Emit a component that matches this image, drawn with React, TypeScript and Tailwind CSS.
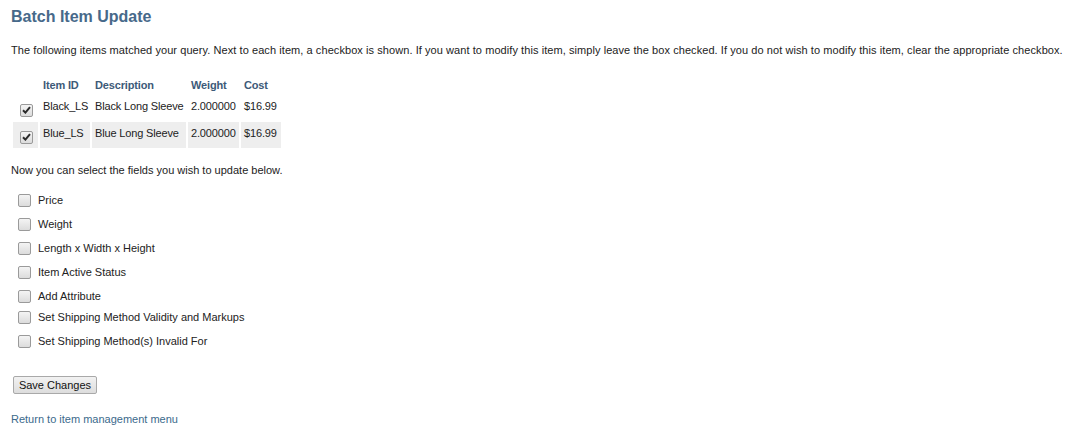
import React from "react";

function Box({ checked = false }: { checked?: boolean }) {
  return (
    <span className="inline-flex h-[13px] w-[13px] shrink-0 items-center justify-center rounded-[2px] border border-[#9a9a9a] bg-gradient-to-b from-[#f4f4f4] to-[#dcdcdc]">
      {checked && (
        <svg width="9" height="8" viewBox="0 0 9 8">
          <path d="M1 4.2 L3.4 6.6 L8 1.2" stroke="#2a2a2a" strokeWidth="2" fill="none" />
        </svg>
      )}
    </span>
  );
}

const rows = [
  { id: "Black_LS", desc: "Black Long Sleeve", weight: "2.000000", cost: "$16.99", bg: "bg-white" },
  { id: "Blue_LS", desc: "Blue Long Sleeve", weight: "2.000000", cost: "$16.99", bg: "bg-[#eeeeee]" },
];

const fields = [
  { label: "Price", h: "h-[24px]" },
  { label: "Weight", h: "h-[24px]" },
  { label: "Length x Width x Height", h: "h-[24px]" },
  { label: "Item Active Status", h: "h-[24px]" },
  { label: "Add Attribute", h: "h-[21px] pt-[3px]" },
  { label: "Set Shipping Method Validity and Markups", h: "h-[24px]" },
  { label: "Set Shipping Method(s) Invalid For", h: "h-[24px]" },
];

export default function App() {
  return (
    <div className="min-h-[440px] w-[1075px] bg-white px-[11px] pt-[7px] text-[11px] text-[#222] [font-family:Tahoma,'Liberation_Sans',Arial,sans-serif]">
      <h1 className="h-[20px] text-[16px] font-bold leading-[20px] text-[#47698a]">Batch Item Update</h1>
      <p className="mt-[16px] whitespace-nowrap leading-[14px] tracking-[0.07px]">
        The following items matched your query. Next to each item, a checkbox is shown. If you want to modify this item, simply leave the box checked. If you do not wish to modify this item, clear the appropriate checkbox.
      </p>
      <table className="mt-[18px] w-[272px] table-fixed border-separate border-spacing-x-[2px] border-spacing-y-[1px] tracking-[-0.15px]">
        <colgroup>
          <col className="w-[25px]" />
          <col className="w-[50px]" />
          <col className="w-[94px]" />
          <col className="w-[51px]" />
          <col className="w-[40px]" />
        </colgroup>
        <thead>
          <tr className="h-[18px] text-left font-bold text-[#3d5a78]">
            <th className="p-0"></th>
            <th className="whitespace-nowrap px-[3px] py-0 font-bold">Item ID</th>
            <th className="whitespace-nowrap px-[3px] py-0 font-bold">Description</th>
            <th className="whitespace-nowrap px-[3px] py-0 font-bold">Weight</th>
            <th className="whitespace-nowrap px-[3px] py-0 font-bold">Cost</th>
          </tr>
        </thead>
        <tbody>
          {rows.map((r) => (
            <tr key={r.id} className="h-[26px]">
              <td className={`${r.bg} p-0 pl-[7px] pt-[7px] align-top`}>
                <Box checked />
              </td>
              <td className={`${r.bg} whitespace-nowrap px-[3px] pt-[4px] align-top leading-[14px]`}>{r.id}</td>
              <td className={`${r.bg} whitespace-nowrap px-[3px] pt-[4px] align-top leading-[14px]`}>{r.desc}</td>
              <td className={`${r.bg} whitespace-nowrap px-[3px] pt-[4px] align-top leading-[14px]`}>{r.weight}</td>
              <td className={`${r.bg} whitespace-nowrap px-[3px] pt-[4px] align-top leading-[14px]`}>{r.cost}</td>
            </tr>
          ))}
        </tbody>
      </table>
      <p className="mt-[14px] leading-[14px]">Now you can select the fields you wish to update below.</p>
      <div className="mt-[11px] flex flex-col">
        {fields.map((f) => (
          <div key={f.label} className={`${f.h} flex items-center gap-[7px] pl-[7px]`}>
            <Box />
            <span className="leading-[14px]">{f.label}</span>
          </div>
        ))}
      </div>
      <div className="mt-[23px]">
        <button className="ml-[2px] h-[18px] w-[84px] rounded-[2px] border border-[#a9a9a9] bg-gradient-to-b from-[#f2f2f2] to-[#dddddd] text-[11px] leading-[14px] text-[#111]">
          Save Changes
        </button>
      </div>
      <div className="mt-[17px]">
        <a href="#" className="leading-[14px] text-[#3b6a8c]">Return to item management menu</a>
      </div>
    </div>
  );
}
